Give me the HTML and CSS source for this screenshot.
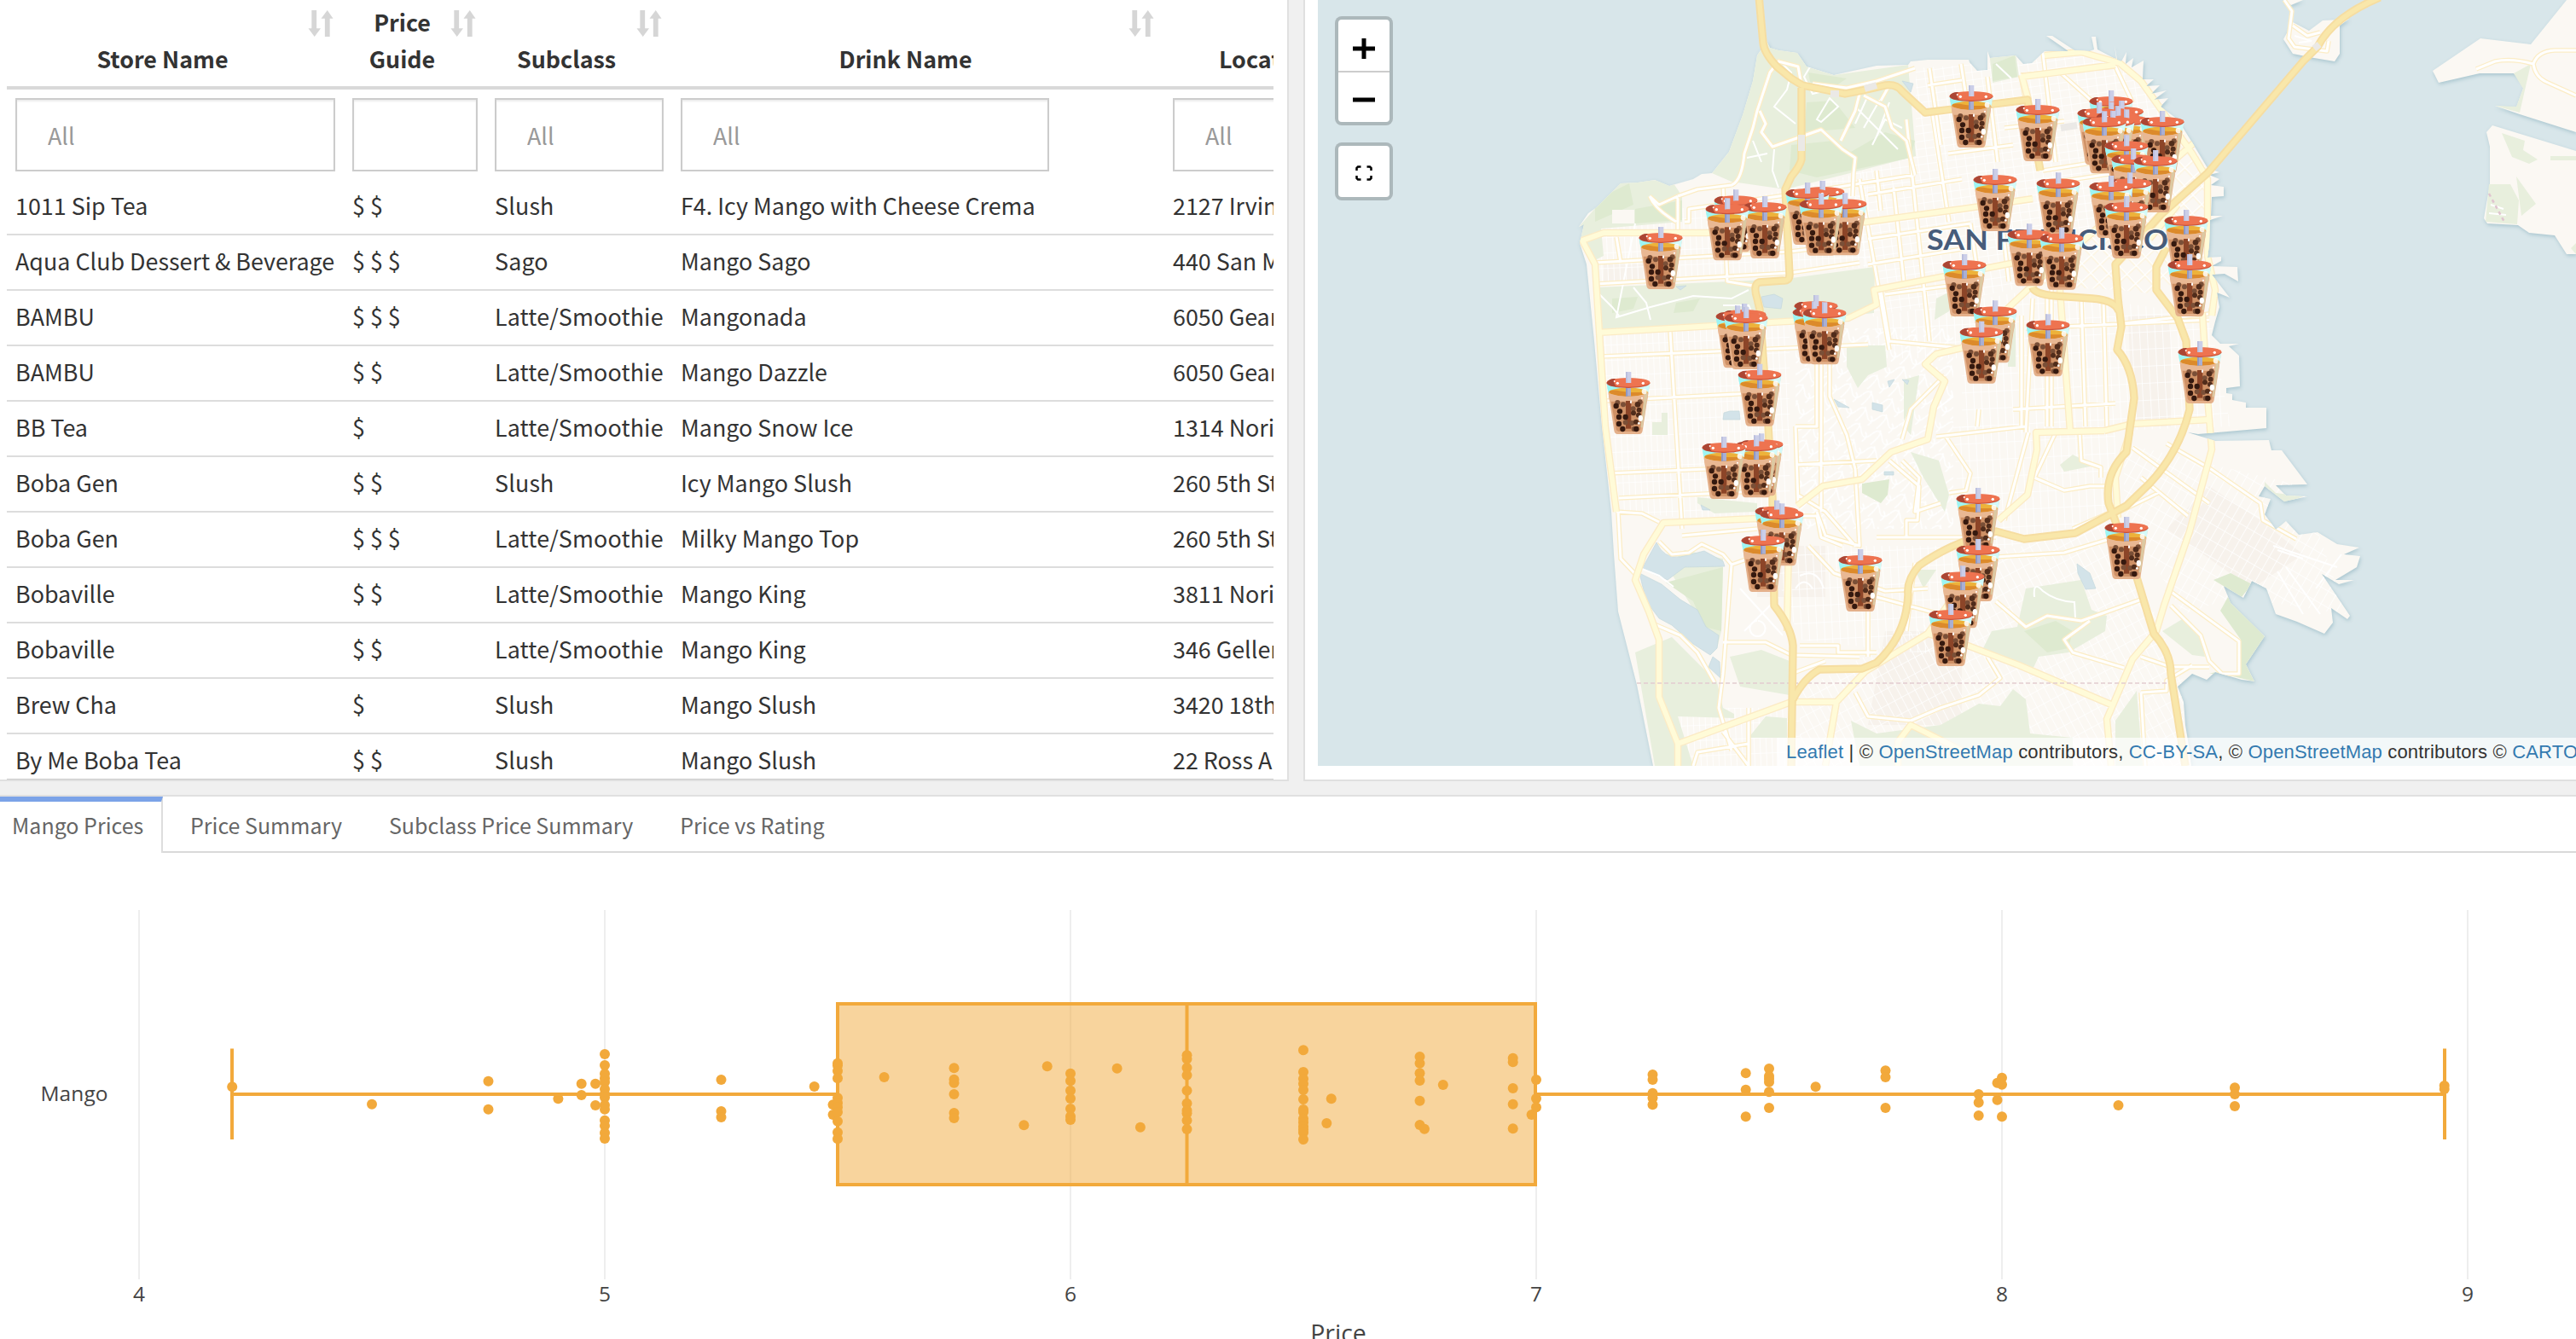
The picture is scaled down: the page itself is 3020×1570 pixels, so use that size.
FILE: index.html
```html
<!DOCTYPE html>
<html lang="en">
<head>
<meta charset="utf-8">
<title>Mango Prices</title>
<link rel="stylesheet" href="styles.css">
</head>
<body>
<main class="dashboard">
  <div class="top-row">
    <section class="panel table-panel">
      <div class="table-scroll">
        <table class="drinks">
          <colgroup><col class="c-store"><col class="c-price"><col class="c-sub"><col class="c-drink"><col class="c-loc"></colgroup>
          <thead>
            <tr class="heads">
              <th>Store Name<svg class="sort" viewBox="0 0 30 32"><use href="#sort"/></svg></th>
              <th>Price Guide<svg class="sort" viewBox="0 0 30 32"><use href="#sort"/></svg></th>
              <th>Subclass<svg class="sort" viewBox="0 0 30 32"><use href="#sort"/></svg></th>
              <th>Drink Name<svg class="sort" viewBox="0 0 30 32"><use href="#sort"/></svg></th>
              <th class="loc">Location</th>
            </tr>
            <tr class="filters">
              <td><input class="filter" placeholder="All"></td>
              <td><input class="filter"></td>
              <td><input class="filter" placeholder="All"></td>
              <td><input class="filter drink-filter" placeholder="All"></td>
              <td><input class="filter" placeholder="All"></td>
            </tr>
          </thead>
          <tbody>
            <tr><td>1011 Sip Tea</td><td>$ $</td><td class="sub">Slush</td><td>F4. Icy Mango with Cheese Crema</td><td>2127 Irving St</td></tr>
            <tr><td>Aqua Club Dessert &amp; Beverage</td><td>$ $ $</td><td class="sub">Sago</td><td>Mango Sago</td><td>440 San Mateo</td></tr>
            <tr><td>BAMBU</td><td>$ $ $</td><td class="sub">Latte/Smoothie</td><td>Mangonada</td><td>6050 Geary Blvd</td></tr>
            <tr><td>BAMBU</td><td>$ $</td><td class="sub">Latte/Smoothie</td><td>Mango Dazzle</td><td>6050 Geary Blvd</td></tr>
            <tr><td>BB Tea</td><td>$</td><td class="sub">Latte/Smoothie</td><td>Mango Snow Ice</td><td>1314 Noriega St</td></tr>
            <tr><td>Boba Gen</td><td>$ $</td><td class="sub">Slush</td><td>Icy Mango Slush</td><td>260 5th St</td></tr>
            <tr><td>Boba Gen</td><td>$ $ $</td><td class="sub">Latte/Smoothie</td><td>Milky Mango Top</td><td>260 5th St</td></tr>
            <tr><td>Bobaville</td><td>$ $</td><td class="sub">Latte/Smoothie</td><td>Mango King</td><td>3811 Noriega St</td></tr>
            <tr><td>Bobaville</td><td>$ $</td><td class="sub">Latte/Smoothie</td><td>Mango King</td><td>346 Gellert Blvd</td></tr>
            <tr><td>Brew Cha</td><td>$</td><td class="sub">Slush</td><td>Mango Slush</td><td>3420 18th St</td></tr>
            <tr><td>By Me Boba Tea</td><td>$ $</td><td class="sub">Slush</td><td>Mango Slush</td><td>22 Ross Alley</td></tr>
          </tbody>
        </table>
      </div>
    </section>

    <section class="panel map-panel">
      <div class="map">
        <svg class="map-canvas" viewBox="1545 0 1475 898" width="1475" height="898">
          <defs>
            <g id="sort" fill="#d6d6d6"><path d="M4 0h6v22h5L7.500 32 0 22h4zM20 32h6V10h4L23 0l-7.500 10H20z"/></g>
            <g id="cup">
              <path d="M-75 42L-50 207Q-48 219-38 219H38Q48 219 50 207L75 42Z" fill="#e4b08a"/>
              <path d="M-64 88L-43 202Q-41 210-34 210H34Q41 210 43 202L64 88Z" fill="#cf9166"/>
              <path d="M-76 42H76L71 72H-71Z" fill="#d3fbfa"/>
              <path d="M-76 42H-32L-26 66-71 72Z" fill="#9df5f3"/>
              <ellipse cy="71" rx="68" ry="15" fill="#edb23a"/>
              <path d="M-68 71Q-66 62-40 65 0 75 66 71 50 86 0 87-55 86-68 71Z" fill="#dc8a2b"/>
              <path d="M-70 76Q0 98 70 76L66 104H-66Z" fill="#e9b893"/>
              <path d="M57 76H68L50 196H43Z" fill="#dcc9a2"/>
              <rect x="-9" y="102" width="19" height="98" fill="#8c4528"/>
              <rect x="-9" y="52" width="18" height="34" fill="#a9afd2"/><rect x="-9" y="52" width="6" height="34" fill="#8e98c4"/>
              <g fill="#7a4f37"><circle cx="-38" cy="108" r="9"/><circle cx="-18" cy="115" r="9"/><circle cx="-10" cy="178" r="9"/><circle cx="13" cy="180" r="9"/><circle cx="17" cy="130" r="9"/><circle cx="41" cy="106" r="9"/><circle cx="20" cy="201" r="9"/></g>
              <g fill="#502c1b"><circle cx="33" cy="115" r="10"/><circle cx="38" cy="134" r="9"/><circle cx="18" cy="145" r="9"/><circle cx="36" cy="152" r="9"/><circle cx="27" cy="176" r="9"/></g>
              <g fill="#35190f"><circle cx="-43" cy="120" r="9.500"/><circle cx="-30" cy="139" r="9.500"/><circle cx="-33" cy="159" r="9.500"/><circle cx="-10" cy="159" r="9.500"/><circle cx="-33" cy="183" r="9.500"/><circle cx="-20" cy="201" r="9.500"/><circle cx="28" cy="201" r="9.500"/></g>
              <g fill="#fff"><ellipse cx="43" cy="163" rx="8" ry="11"/><circle cx="37" cy="181" r="4"/><ellipse cx="9" cy="106" rx="3" ry="6"/><ellipse cx="56" cy="69" rx="9" ry="10" opacity=".85"/><circle cx="48" cy="92" r="3"/></g>
              <ellipse cy="40" rx="76" ry="17" fill="#cc5238"/>
              <ellipse cy="37" rx="76" ry="16" fill="#ee7350"/>
              <path d="M-76 38Q-68 22-45 24-58 34-42 52-72 50-76 38Z" fill="#ab4634"/>
              <g fill="#fff"><circle cx="-38" cy="40" r="5"/><circle cx="-49" cy="33" r="3"/><circle cx="52" cy="40" r="5"/></g>
              <rect x="-9" width="19" height="39" fill="#cbcee8"/><rect x="-9" width="5" height="39" fill="#b8bddc"/>
            </g>
            <pattern id="avenues" width="7" height="18" patternUnits="userSpaceOnUse" patternTransform="rotate(-2.500)"><path d="M0 0V18M0 0H7" class="street"/></pattern>
            <pattern id="downtown" width="11" height="9" patternUnits="userSpaceOnUse" patternTransform="rotate(-8)"><path d="M0 0V9M0 0H11" class="street"/></pattern>
            <pattern id="soma" width="15" height="15" patternUnits="userSpaceOnUse" patternTransform="rotate(47)"><path d="M0 0V15M0 0H15" class="soma-casing"/><path d="M0 0V15M0 0H15" class="street soma-street"/></pattern>
            <pattern id="mission" width="9" height="20" patternUnits="userSpaceOnUse" patternTransform="rotate(-3)"><path d="M0 0V20M0 0H9" class="street"/></pattern>
            <pattern id="south" width="9" height="17" patternUnits="userSpaceOnUse" patternTransform="rotate(-28)"><path d="M0 0V17M0 0H9" class="street"/></pattern>
            <pattern id="bayview" width="10" height="17" patternUnits="userSpaceOnUse" patternTransform="rotate(30)"><path d="M0 0V17M0 0H10" class="street"/></pattern>
            <pattern id="hills" width="26" height="20" patternUnits="userSpaceOnUse" patternTransform="rotate(20)"><path d="M0 8Q7-4 13 8T26 8M3 20Q12 4 8 0M18 20Q24 12 18 8" class="street"/></pattern>
            <path id="city" d="M1938 898L1919 803 1897 717 1892 650 1889 600 1878 500 1869 400 1860 310 1852 285 1857 263 1851 266 1862 250 1872 243 1900 215 1920 214 1940 211 1957 218 1985 210 1995 204 2007 203 2027 178 2043 135 2055 95 2060 65 2071 48 2075 56 2085 59 2107 62 2118 78 2150 88 2200 77 2237 76 2240 72 2260 70 2308 70 2309 73 2318 83 2330 82 2330 60 2333 68 2363 65 2372 75 2382 74 2397 60 2425 60 2399 42 2406 42 2432 59 2450 60 2455 58 2452 43 2457 43 2459 58 2478 68 2481 69 2479 53 2482 70 2487 72 2493 61 2492 75 2501 68 2499 79 2513 71 2512 93 2525 93 2516 101 2532 100 2522 110 2540 106 2525 117 2542 115 2533 125 2553 140 2570 167 2588 197 2602 202 2590 205 2602 210 2592 217 2607 219 2607 230 2593 231 2592 253 2606 253 2591 258 2590 287 2588 302 2604 301 2604 306 2593 312 2623 313 2624 330 2608 321 2593 322 2614 349 2599 343 2602 360 2597 377 2593 393 2603 403 2625 403 2613 406 2625 417 2626 453 2610 455 2610 461 2617 462 2617 469 2633 472 2633 478 2657 478 2657 502 2577 509 2565 507 2597 517 2660 516 2663 528 2675 528 2705 568 2668 569 2680 581 2705 582 2678 588 2655 570 2648 582 2662 585 2655 603 2668 621 2680 611 2695 627 2717 624 2740 638 2766 642 2748 650 2767 652 2763 665 2738 680 2760 680 2742 685 2722 673 2755 722 2752 726 2733 713 2735 730 2725 743 2693 729 2668 720 2657 690 2640 681 2630 701 2607 687 2615 707 2655 746 2633 779 2643 799 2628 797 2597 788 2587 797 2570 790 2553 805 2560 823 2562 850 2567 880 2569 898Z"/>
            <clipPath id="city-clip"><use href="#city"/></clipPath>
            <path id="streets-minor" d="M1870 308L2098 295 2180 285M1870 333L2098 320 2180 308M1895 278L1900 308M1967 230V275M2020 217L2025 330 2055 335M1934 230L1945 240 1967 230M1934 230Q1940 245 1965 260M1975 260H1980V245L2100 228 2245 205M2205 247L2200 200M1877 418L2190 404M1882 470L2075 460M1886 555L2000 550M1898 584L2078 575M1958 388L1972 620M1972 628L2060 620M2135 425V600M2105 500H2130V425M2105 545L2200 540M2108 590L2105 500M2145 385V465L2165 510 2175 550M2180 210L2215 410M2235 140L2262 400M2265 130L2285 260M2205 340L2215 400 2300 408M2190 228L2300 210M2190 280L2310 262M2210 345L2285 335 2290 372M2262 80L2275 170M2299 75L2306 120M2369 88L2390 200M2395 62L2410 190M2369 88L2480 78 2500 120M2412 82L2510 170M2405 335V500M2440 350L2445 500M2466 352L2470 500M2383 350L2375 507M2370 370V500M2360 480L2480 473M2400 345V500M2482 380L2590 368M2375 385L2590 375M2320 480L2318 500M2270 512L2375 500M2280 440L2240 480 2230 515M2350 610L2378 507M2430 620L2480 598M2410 507L2385 560 2420 575 2450 570 2470 570M2438 507L2440 540 2463 548V560M2500 525L2590 590M2510 560L2565 605M2540 520L2592 550 2650 590 2653 610 2692 632M2485 600L2530 578M2340 653L2420 648 2480 630M2340 705L2375 735 2400 722 2440 728 2510 703M2450 728L2420 750 2430 765 2490 783M2540 690L2625 752V790H2605L2590 775 2580 745 2545 710M2510 770L2545 782 2590 782M2510 812L2540 810V798L2570 780M2510 812L2515 898M2200 630H2340M2175 550L2180 640 2140 628 2130 600M2230 540L2250 560 2245 600 2275 590M2215 540L2250 570 2248 610 2235 610V630M2280 510L2310 555 2305 575 2285 578M2120 640L2150 672 2210 693 2260 690M2020 753H2070L2100 768 2180 770M2110 757H2155V765H2200M2190 700V770M2030 662L2020 790 2015 830 2030 880M1945 635L1960 650 1980 648 1995 638 2020 650 2030 662 2050 655M1935 730L1970 745 1990 765 2010 800M1895 600L1925 602 1945 612M1897 600L1900 655 1917 673M2107 605L2130 605 2135 630 2160 640M2107 580L2140 600 2175 640M2097 690V660M1985 898L1990 882 2050 872M2050 830V898M2175 812L2190 840 2240 845 2275 830 2320 815 2345 795 2330 770M2100 790L2140 775M2245 660L2235 740M2310 730L2200 700M2020 858L2050 898M2260 100L2300 94M2330 90L2342 190M2284 180L2360 170M2350 150L2420 142M2310 262L2320 330M2345 240L2355 330M2190 310L2300 292M2395 200L2470 188M2400 215L2480 203M2220 220L2232 330"/>
            <path id="streets-presidio" d="M2030 217Q2042 212 2045 180L2055 150 2060 130 2075 85 2085 72 2108 78 2112 100M2063 130L2070 145 2065 155 2078 172 2135 152 2160 175 2175 185 2173 203 2172 230M1967 230L1990 222 2030 217M2158 165L2175 130 2180 110M2245 80L2200 95 2165 103 2125 98M2245 205L2235 165 2218 150 2210 125 2185 112M2205 118L2215 100"/>
            <path id="streets-major" d="M2383 233L2300 245 2190 260 2000 273H1880L1855 282 1870 310 1875 390 1882 500 1895 600M1873 390L2093 377 2167 373 2200 357 2197 340 2300 320 2367 307M2060 608L1950 613 1927 650 1917 680 1933 717 1945 750V817L1967 872V898M1967 872L2100 823H2153L2187 787 2260 743 2290 700M2107 593L2137 570 2183 562 2217 530 2260 515 2267 477 2280 447 2257 427 2270 415 2300 408 2350 365 2380 337 2575 165M2415 340L2427 507M2467 505L2387 507 2388 527 2377 580 2343 610M2582 367L2588 467 2593 527 2567 623 2537 710 2528 740 2500 773 2470 843 2475 898M2260 743L2307 757 2367 780 2477 827M2467 505L2500 497 2590 492M2370 88L2378 117M2370 90L2480 76M2397 65L2440 61 2485 74 2510 95 2570 180 2588 210V300L2597 340 2593 370M2097 640L2095 740M2153 823L2140 898M2225 898V870L2240 850 2310 885M2553 240L2520 280M2497 507L2480 560 2483 607"/>
            <path id="streets-east" d="M2903 81L2925 72Q2945 68 2970 75 2975 60 2995 59H3020M2970 75Q2972 90 2985 96L3020 112M2678 0L2687 13 2683 45 2690 55 2728 60 2730 48M2688 30L2705 42 2720 38"/>
            <path id="highways" d="M2062-5L2067 50Q2068 62 2083 78L2100 92 2113 100 2163 110Q2190 105 2210 100 2223 98 2230 107L2257 132 2377 117 2392 200M2112 103V187Q2110 195 2100 207L2093 222 2098 322Q2098 330 2090 329L2062 331Q2055 334 2060 350L2063 363 2073 500 2078 583 2080 710Q2100 735 2102 757L2100 898M2790-3Q2735 20 2717 55L2700 72 2588 203 2533 252 2480 310 2483 350 2487 383 2482 410Q2500 430 2502 467L2493 530Q2467 555 2472 590L2505 677 2525 743Q2545 765 2545 790L2562 898M2383 337Q2385 345 2410 347L2453 350Q2480 352 2484 365M2540 290L2528 313V340L2553 373 2563 400 2567 480Q2555 530 2520 567L2493 593 2433 625 2373 632 2340 623Q2290 635 2250 663 2235 680 2237 697 2235 745 2200 777L2183 784 2133 785Q2115 795 2102 820"/>
          </defs>
          <rect x="1545" width="1475" height="898" fill="#d8e6ea"/>
          <g class="land">
            <use href="#city"/>
            <path d="M2677 46L2688 26 2707 36 2723 24 2743 23 2754 22 2743 30 2743 63 2737 72 2713 68 2688 63ZM2678 0L2686 6 2700 0ZM2852 83L2908 45 2967 52 3009 0H3020V155L2954 134 2925 124 2950 126 2960 98 2947 86 2907 86 2859 97ZM2915 155L2922 147 3020 177V298H3009L2995 276 2965 273 2952 264 2916 262 2912 256 2919 216 2919 172Z"/>
          </g>
          <g clip-path="url(#city-clip)">
            <path class="tint" d="M2495 370H2545V500H2500ZM2590 570L2650 610 2700 650 2640 690 2540 620ZM2060 640H2140V700H2060ZM1880 310H1960V330H1880ZM2210 740H2300V850H2190Z"/>
            <path fill="url(#avenues)" d="M1870 262L2100 222 2195 200V313L1872 335ZM1876 390L2098 380V660H2070V615L1895 600Z"/>
            <path fill="url(#downtown)" d="M2246 80L2470 64 2560 150 2384 335 2190 372 2175 203 2246 183Z"/>
            <path fill="url(#soma)" d="M2384 335L2560 155 2588 200 2588 300 2530 345 2484 340Z"/>
            <path fill="url(#mission)" d="M2195 372L2384 340 2590 370 2615 500 2380 508H2300V420H2195Z"/>
            <path fill="url(#hills)" d="M2105 385H2290V620H2105Z"/>
            <path fill="url(#mission)" d="M2290 500H2480V600L2300 660ZM2070 640H2290V770L2110 750Z"/>
            <path fill="url(#south)" d="M2110 810L2260 730 2300 660 2480 610 2560 800V898H2110Z"/>
            <path fill="url(#bayview)" d="M2490 520L2700 570 2750 720 2620 700 2560 720 2490 600Z"/>
            <path fill="url(#avenues)" d="M1950 830H2110V898H1950Z"/>
            <g class="park">
              <path d="M2007 203L2027 178 2060 65 2071 48 2107 62 2118 78 2150 88 2237 76 2246 183 2173 202 2093 222 2030 213ZM1851 266L1900 210 1960 212 1972 230V260L1877 268 1880 300 1870 305 1852 285ZM1872 337L2093 327 2198 313 2197 367 2093 378 1877 388ZM2332 60L2363 62 2367 90 2336 97ZM2270 350L2290 340 2285 365 2268 375ZM2165 405L2210 405 2212 430 2190 440 2178 455 2165 430ZM2232 445L2250 440 2240 510 2232 500ZM1937 495H1948V484H1955V510H1937ZM1990 583L2060 590V600L2010 602 1990 590ZM2240 530L2273 540 2285 580 2280 600 2255 560ZM2415 545L2430 533 2455 546 2420 553ZM1917 765L1960 747 2013 800 2020 830 2033 837V842L1967 840 1985 898H1940ZM1955 665L1975 645 2020 655 2018 740 2013 760ZM2028 770L2065 762 2098 775V815L2040 805ZM2070 840L2095 842V865H2050ZM2375 690L2440 680 2452 715 2470 722 2468 740 2425 765 2390 770 2383 785 2325 760 2335 740 2365 735ZM2535 740L2560 725 2580 745 2585 770 2570 768ZM2480 845L2505 810 2512 898H2480ZM2275 850L2320 825 2345 828 2360 808 2375 820 2380 860 2430 865 2430 898H2180L2170 845 2200 860ZM2354 380H2363V430H2354ZM2245 668H2270L2255 690ZM2590 360H2598V367H2588ZM2655 565L2668 578 2700 582 2680 590 2655 575Z"/>
            </g>
            <g class="wood">
              <path d="M2100 170L2150 165 2170 178 2210 155 2245 165 2240 185 2130 208 2098 200ZM2118 120L2150 118 2175 150 2115 155ZM1917 245L1972 235V258L1917 262ZM1870 235L1910 215 1915 240 1870 260ZM1890 350L1920 348 1915 362 1890 367ZM1965 355L1993 350 1985 365 1962 367ZM2120 85L2165 92 2150 102 2122 96ZM1953 683L2020 665 2018 740 1998 735 1985 705ZM2183 567L2215 562 2213 580 2205 590 2183 578ZM2373 740L2410 728 2430 740 2425 760 2400 765ZM2595 680L2615 672 2640 685 2628 700ZM2612 700L2655 746 2633 779 2643 799 2597 788 2590 790 2627 790V750L2603 716ZM2336 75L2362 65 2365 90 2336 95Z"/>
            </g>
            <path d="M1890 246H1916V262H1890Z" fill="#fbf8f3"/>
            <g class="lake">
              <path d="M1942 636Q1950 655 1970 653L1998 646 2020 658 2022 664 1975 665 1955 680 1925 667ZM1922 672L1948 685 1970 703 1990 715 2000 735 2015 745 2013 760 2005 768 1985 755 1960 733 1945 725 1930 705ZM2008 770L2016 776 2017 795 2003 782ZM2021 484L2028 482H2039L2040 492H2020ZM2065 348L2080 345 2090 350 2088 362 2068 360ZM2150 468L2168 478 2155 477ZM2195 472L2207 475V483L2195 480ZM2435 661L2450 672 2457 690 2445 691 2436 672ZM1994 592L2005 598H1996ZM2213 447L2221 445 2215 454ZM2230 445L2238 446 2236 451ZM2209 553H2220V557H2209ZM1965 336L1977 335 1970 340ZM2230 95L2243 98 2240 108Z"/>
            </g>
            <g class="winding">
              <path d="M2085 70L2100 85 2095 105 2080 125 2105 145M2130 65L2115 90 2125 110 2145 105M2130 140L2145 115 2155 125 2135 143ZM2175 145L2190 112M2185 150L2205 115M2200 160L2215 120M2175 125L2225 175M2195 170L2210 140 2230 150M2055 165L2065 190M2048 185L2072 180M2080 175L2078 200 2085 220M1917 262L1895 372 1935 360 1985 347 2030 350 2050 340M1875 345L1890 360 1898 370M1915 337L1930 355 1935 375M2020 358H2050L2060 380M2340 75L2358 92M2385 700Q2383 680 2395 693 2410 705 2432 706L2433 725M2270 480L2290 465M2240 480L2230 500M2110 675Q2130 665 2138 690M2105 690Q2115 675 2125 690M2060 728A9 9 0 1 0 2061 728M2040 690L2090 745M2085 700L2045 740M2670 645L2700 655M2715 690L2745 650M2680 665L2720 720M2670 670L2700 720M2665 640L2740 665M1925 667L1945 675 1962 688"/>
            </g>
            <use href="#streets-minor" class="minor-case"/><use href="#streets-minor" class="minor-line"/>
            <use href="#streets-presidio" class="minor-case"/><use href="#streets-presidio" class="minor-line"/>
            <use href="#streets-major" class="major-case"/><use href="#streets-major" class="major-line"/>
            <path d="M1919 801H2545" class="county"/>
          </g>
          <g class="park"><path d="M2933 156L2960 165 2958 176 2975 187 2965 192 2945 184ZM2918 216H2943L2953 235 2951 263 2914 260ZM2950 207L2973 239 2956 253ZM2990 183H3020V188H2990ZM2947 86L2967 75 2954 132 2925 124 2950 125 2958 104ZM3014 291L3020 285V298Z"/></g>
          <use href="#streets-east" class="minor-case"/><use href="#streets-east" class="minor-line"/>
          <path class="winding" d="M2690 42L2710 48 2695 50M2920 240L2935 245M2918 250L2938 252"/>
          <path d="M2918 227L2937 262" stroke="#dfc4cf" stroke-width="2.500" stroke-dasharray="4 4"/>
          <use href="#highways" class="hwy-case"/><use href="#highways" class="hwy-line"/>
          <path d="M2112 158V177M2146 110H2156M2186 104L2200 100M2416 150L2435 147M2713 57L2719 52" stroke="#ebe9e6" stroke-width="8" fill="none"/>
          <text class="city-name" x="2259" y="292.500" textLength="283" lengthAdjust="spacingAndGlyphs">SAN FRANCISCO</text>
          <g id="markers"></g>
        </svg>
        <div class="map-controls">
          <div class="control">
            <button class="control-btn zoom" aria-label="Zoom in"><svg width="26" height="26"><path d="M0 10.500H26V15.500H0ZM10.500 1H15.500V25H10.500Z"/></svg></button>
            <button class="control-btn zoom" aria-label="Zoom out"><svg width="26" height="26"><path d="M0 10.500H26V15.500H0Z"/></svg></button>
          </div>
          <div class="control">
            <button class="control-btn full" aria-label="Full screen"><svg width="20" height="18" fill="none" stroke="#000" stroke-width="2.500"><path d="M1.500 6V3L3 1.500H6.500M13.500 1.500H17L18.500 3V6M18.500 12V15L17 16.500H13.500M6.500 16.500H3L1.500 15V12"/></svg></button>
          </div>
        </div>
        <div class="attribution"><a>Leaflet</a> | © <a>OpenStreetMap</a> contributors, <a>CC-BY-SA</a>, © <a>OpenStreetMap</a> contributors © <a>CARTO</a></div>
      </div>
    </section>
  </div>

  <section class="chart-panel">
    <nav class="tabs">
      <a class="tab active">Mango Prices</a>
      <a class="tab">Price Summary</a>
      <a class="tab">Subclass Price Summary</a>
      <a class="tab">Price vs Rating</a>
    </nav>
    <svg class="chart" viewBox="0 1000 3020 570" width="3020" height="570">
      <g id="grid"></g>
      <rect x="982" y="1177" width="818" height="212" class="box"/>
      <path class="whisker" d="M272 1283H982M1800 1283H2866M272 1229.500V1336M2866 1229.500V1336M1391.500 1177V1389"/>
      <g id="points"></g>
      <text class="tick" x="126.500" y="1291" text-anchor="end" textLength="79">Mango</text>
      <text class="axis-title" x="1569" y="1573.500" text-anchor="middle">Price</text>
    </svg>
  </section>
</main>
<script src="script.js"></script>
</body>
</html>
```
FILE: styles.css
```css
* { box-sizing: border-box; }
body { margin: 0; background: #f0f0f0; color: #333; font-family: "Noto Sans CJK SC", "Noto Sans", sans-serif; font-size: 26.87px; line-height: 43px; overflow: hidden; }
.dashboard { display: grid; grid-template-rows: 916px 638px; gap: 16px; width: 3020px; height: 1570px; overflow: hidden; }
.top-row { display: grid; grid-template-columns: 1511px 1fr; gap: 17px; min-width: 0; }
.panel { background: #fff; border-bottom: 2px solid #e0e0e0; height: 916px; min-width: 0; }
.table-panel { border-right: 2px solid #e0e0e0; padding: 0 16px 0 8px; }
.table-scroll { height: 914px; overflow: hidden; border-bottom: 1px solid #ccc; }

.drinks { table-layout: fixed; width: 1657px; border-collapse: separate; border-spacing: 0; }
.c-store { width: 395px; }
.c-price { width: 167px; }
.c-sub { width: 218px; }
.c-drink { width: 577px; }
.c-loc { width: 300px; }
.heads th { position: relative; height: 105px; padding: 0 40px 11px 10px; vertical-align: bottom; font-weight: 700; border-bottom: 4px solid #d9d9d9; }
.heads .loc { text-align: left; padding-left: 64px; }
.sort { position: absolute; right: 12px; top: 12px; width: 30px; height: 31px; }
.filters td { height: 106px; padding: 10px; }
.filter { display: block; width: 100%; height: 86px; border: 2px solid #ccc; border-radius: 0; background: #fff; padding: 0 36px; font: inherit; box-shadow: inset 0 2px 2px rgba(0, 0, 0, .075); }
.filter::placeholder { color: #999; opacity: 1; }
.drink-filter { width: 432px; }
.drinks tbody td { height: 65px; padding: 8px 0 12px 10px; border-bottom: 2px solid #ddd; white-space: nowrap; }
.drinks .sub { letter-spacing: .15px; }

.map-panel { border-left: 2px solid #e0e0e0; padding-left: 15px; }
.map { position: relative; width: 1475px; height: 898px; overflow: hidden; }
.map-canvas { display: block; }
.land { fill: #fbf8f3; filter: drop-shadow(1px 2px 2px #aac6cf); }
.tint { fill: #f7f2ec; }
.street { fill: none; stroke: #fff; stroke-width: 1.6; }
.soma-casing { fill: none; stroke: #fdf1d3; stroke-width: 5; }
.soma-street { stroke-width: 3.2; }
.park { fill: #e8efdd; }
.wood { fill: #deead0; }
.lake { fill: #d3e3e9; stroke: #c4d8dd; stroke-width: .7; }
.winding { fill: none; stroke: #fff; stroke-width: 2; }
.minor-case { fill: none; stroke: #fcedc6; stroke-width: 5.6; stroke-linejoin: round; }
.minor-line { fill: none; stroke: #fff; stroke-width: 3; stroke-linejoin: round; }
.major-case { fill: none; stroke: #fcebc5; stroke-width: 8.5; stroke-linejoin: round; }
.major-line { fill: none; stroke: #fffbd8; stroke-width: 5.8; stroke-linejoin: round; }
.hwy-case { fill: none; stroke: #f6dda1; stroke-width: 9.4; stroke-linejoin: round; }
.hwy-line { fill: none; stroke: #f9e7aa; stroke-width: 5.6; stroke-linejoin: round; }
.county { fill: none; stroke: #e2cbd0; stroke-width: 1.6; stroke-dasharray: 5 3; }
.city-name { font: 700 33px Lato, sans-serif; fill: #475c7a; stroke: #fff; stroke-opacity: .6; stroke-width: 3px; paint-order: stroke; }
.map-controls { position: absolute; left: 20px; top: 19px; display: flex; flex-direction: column; gap: 20px; }
.control { width: 68px; border: 4px solid rgba(0, 0, 0, .2); border-radius: 8px; background: #fff; background-clip: padding-box; }
.control-btn { display: flex; align-items: center; justify-content: center; width: 60px; height: 60px; padding: 0; border: 0; background: none; }
.control-btn.zoom { padding-top: 8px; }
.control-btn.full { padding-top: 4px; }
.control-btn + .control-btn { border-top: 2px solid #ccc; padding-top: 6px; }
.attribution { position: absolute; left: 538px; right: 0; bottom: 0; height: 33px; padding-left: 11px; line-height: 33px; font-family: "Liberation Sans", Arial, sans-serif; font-size: 22px; letter-spacing: .17px; white-space: nowrap; background: rgba(255, 255, 255, .7); }
.attribution a { color: #337ab0; }

.chart-panel { background: #fff; border-top: 2px solid #e0e0e0; min-width: 0; }
.tabs { display: flex; height: 66px; font-size: 25px; color: #666; box-shadow: inset 0 -2px #d9d9d9; }
.tab { padding: 12px 0 0 55px; white-space: nowrap; }
.tab.active { width: 191px; padding: 6px 0 0 14px; border-top: 6px solid #7ba3e8; border-right: 2px solid #ddd; background: #fff; }
.tab.active + .tab { padding-left: 32px; }
.chart { display: block; }
.grid-line { stroke: #eee; stroke-width: 2; }
.box { fill: #f2a93b; fill-opacity: .5; stroke: #f2a93b; stroke-width: 4; }
.whisker { fill: none; stroke: #f2a93b; stroke-width: 4; }
.point { fill: #f2a93b; }
.tick { font: 24.5px "Open Sans", sans-serif; fill: #444; }
.axis-title { font: 28.5px "Open Sans", sans-serif; fill: #444; }
```
FILE: script.js
```js
const NS = 'http://www.w3.org/2000/svg';
function add(parent, tag, attrs, text) {
  const el = document.createElementNS(NS, tag);
  for (const k in attrs) el.setAttribute(k, attrs[k]);
  if (text) el.textContent = text;
  document.getElementById(parent).appendChild(el);
}

// Shops: x of the straw, y of its tip
const shops = [
  [1947,266],[2025,232.3],[2035,222.3],[2069,230],[2119,214],[2136.7,212],[2135,226.7],[2163,226.3],
  [2037,358.3],[2045,356],[2047,360],[2129,346],[2127,353.5],[2139,354.3],[1909,436],[2063,426.7],
  [2311,100],[2389,116],[2475,106],[2461,120],[2475,119.5],[2487.3,118],[2483,124.3],[2477,129.8],[2493,128.3],
  [2467,130.3],[2535,130],[2493,158.3],[2501,174],[2527,176],[2339,198],[2413,202.3],[2497,202.3],[2475,206],
  [2493,230],[2379,262.3],[2417,266.7],[2563,246],[2567,298],[2303,298],[2339,352.3],[2323,376.7],[2401,368.3],
  [2579,400],[2021,512],[2065,508.3],[2059,510.3],[2083,586.7],[2089,590.3],[2067,621],[2181,644],
  [2319,572],[2319,632],[2301,663.3],[2287,708],[2493,606]
];
shops.sort((a, b) => a[1] - b[1]).forEach(([x, y]) =>
  add('markers', 'use', { href: '#cup', transform: `translate(${x} ${y}) scale(.3333)` }));

// Price axis
const px = v => 163 + (v - 4) * 546;
for (let v = 4; v <= 9; v++) {
  add('grid', 'line', { x1: px(v), x2: px(v), y1: 1067, y2: 1500, class: 'grid-line' });
  add('grid', 'text', { x: px(v), y: 1526, class: 'tick', 'text-anchor': 'middle' }, String(v));
}

// Drinks: price, then the jitter of each one
const prices = [
  [4.2,373],[4.5,434],[4.75,353,452],[4.9,415],[4.95,362,402],[4.98,362,438],
  [5,258,297,327,343,356,381,398,410,437,452,491,510,535,555],[5.25,348,459,480],[5.45,372],
  [5.49,436,471],[5.5,290,298,317,343,412,430,445,462,494,533,556],[5.6,339],[5.75,307,347,359,399,465,483],
  [5.9,508],[5.95,301],[6,326,352,386,414,450,477,489],[6.1,308],[6.15,515],
  [6.25,262,275,306,332,386,431,456,466,491,522],[6.5,244,321,345,362,384,417,453,462,485,498,512,523,534,558],
  [6.55,501],[6.56,415],[6.75,267,290,325,351,422,507],[6.76,521],[6.8,366],[6.95,272,286,378,434,520],
  [6.99,471],[7,348,414,445],[7.25,330,348,395,412,436],[7.45,325,383,478],[7.5,309,335,345,356,391,447],
  [7.6,373],[7.75,316,339,447],[7.95,399,428,474],[7.99,359,419],[8,341,365,478],[8.25,438],
  [8.5,376,399,441],[8.95,369,381]
];
prices.forEach(([v, ...jitter]) => jitter.forEach(j =>
  add('points', 'circle', { cx: px(v), cy: 1150 + j / 3, r: 6, class: 'point' })));
```
